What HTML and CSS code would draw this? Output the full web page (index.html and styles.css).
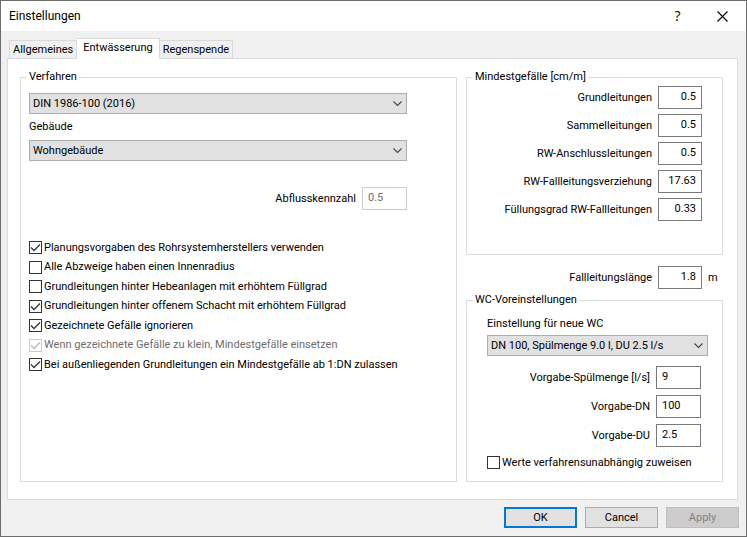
FILE: index.html
```html
<!DOCTYPE html>
<html lang="de">
<head>
  <meta charset="UTF-8" />
  <meta name="viewport" content="width=device-width, initial-scale=1.0" />
  <title>Einstellungen</title>
  <link rel="stylesheet" href="styles.css">
</head>
<body>
  <div class="dialog">
    <header class="titlebar">
      <h1>Einstellungen</h1>
      <button type="button" class="title-btn" aria-label="Hilfe">?</button>
      <button type="button" class="title-btn" aria-label="Schließen">
        <svg width="11" height="11" viewBox="0 0 11 11"><path d="M.5 .5l10 10M10.5 .5l-10 10" stroke="#000" stroke-width="1.1" fill="none"/></svg>
      </button>
    </header>

    <nav class="tabs">
      <button type="button" class="tab">Allgemeines</button>
      <button type="button" class="tab active">Entwässerung</button>
      <button type="button" class="tab">Regenspende</button>
    </nav>

    <main class="page">
      <fieldset class="group">
        <legend>Verfahren</legend>
        <div class="verfahren">
          <select aria-label="Verfahren">
            <option>DIN 1986-100 (2016)</option>
          </select>
          <label class="select-label" for="gebaeude">Gebäude</label>
          <select id="gebaeude">
            <option>Wohngebäude</option>
          </select>
          <div class="row kennzahl">
            <label for="abfluss">Abflusskennzahl</label>
            <input type="text" id="abfluss" class="field" value="0.5" disabled>
          </div>
          <div class="checks">
            <label class="check"><input type="checkbox" checked>Planungsvorgaben des Rohrsystemherstellers verwenden</label>
            <label class="check"><input type="checkbox">Alle Abzweige haben einen Innenradius</label>
            <label class="check"><input type="checkbox">Grundleitungen hinter Hebeanlagen mit erhöhtem Füllgrad</label>
            <label class="check"><input type="checkbox" checked>Grundleitungen hinter offenem Schacht mit erhöhtem Füllgrad</label>
            <label class="check"><input type="checkbox" checked>Gezeichnete Gefälle ignorieren</label>
            <label class="check disabled"><input type="checkbox" checked disabled>Wenn gezeichnete Gefälle zu klein, Mindestgefälle einsetzen</label>
            <label class="check"><input type="checkbox" checked>Bei außenliegenden Grundleitungen ein Mindestgefälle ab 1:DN zulassen</label>
          </div>
        </div>
      </fieldset>

      <div class="side">
        <fieldset class="group">
          <legend>Mindestgefälle [cm/m]</legend>
          <div class="gefaelle">
            <div class="row">
              <label for="grund">Grundleitungen</label>
              <input type="text" id="grund" class="field num" value="0.5">
            </div>
            <div class="row">
              <label for="sammel">Sammelleitungen</label>
              <input type="text" id="sammel" class="field num" value="0.5">
            </div>
            <div class="row">
              <label for="anschluss">RW-Anschlussleitungen</label>
              <input type="text" id="anschluss" class="field num" value="0.5">
            </div>
            <div class="row">
              <label for="verziehung">RW-Fallleitungsverziehung</label>
              <input type="text" id="verziehung" class="field num" value="17.63">
            </div>
            <div class="row">
              <label for="fuellung">Füllungsgrad RW-Fallleitungen</label>
              <input type="text" id="fuellung" class="field num" value="0.33">
            </div>
          </div>
        </fieldset>

        <div class="row laenge">
          <label for="laenge">Fallleitungslänge</label>
          <input type="text" id="laenge" class="field num" value="1.8">
          <span class="unit">m</span>
        </div>

        <fieldset class="group">
          <legend>WC-Voreinstellungen</legend>
          <div class="wc">
            <label for="wc">Einstellung für neue WC</label>
            <select id="wc">
              <option>DN 100, Spülmenge 9.0 l, DU 2.5 l/s</option>
            </select>
            <div class="vorgaben">
              <div class="row">
                <label for="spuel">Vorgabe-Spülmenge [l/s]</label>
                <input type="text" id="spuel" class="field" value="9">
              </div>
              <div class="row">
                <label for="dn">Vorgabe-DN</label>
                <input type="text" id="dn" class="field" value="100">
              </div>
              <div class="row">
                <label for="du">Vorgabe-DU</label>
                <input type="text" id="du" class="field" value="2.5">
              </div>
            </div>
            <label class="check"><input type="checkbox">Werte verfahrensunabhängig zuweisen</label>
          </div>
        </fieldset>
      </div>
    </main>

    <footer class="buttons">
      <button type="button" class="btn default">OK</button>
      <button type="button" class="btn">Cancel</button>
      <button type="button" class="btn" disabled>Apply</button>
    </footer>
  </div>
</body>
</html>
```

FILE: styles.css
```css
* {
  box-sizing: border-box;
}

body {
  margin: 0;
  font-family: Tahoma, Roboto, sans-serif;
  font-size: 11px;
  line-height: 14px;
  color: #000;
}

button, input, select {
  font: inherit;
  color: inherit;
  margin: 0;
}

.dialog {
  display: flex;
  flex-direction: column;
  min-height: 100vh;
  background: #f0f0f0;
  border: 1px solid #6d6d6d;
}

/* title bar */
.titlebar {
  display: flex;
  align-items: center;
  height: 30px;
  padding: 0 1px 0 8px;
  background: #fff;
}

.titlebar h1 {
  flex: 1;
  margin: 0;
  font-size: 12px;
  font-weight: normal;
}

.title-btn {
  display: flex;
  align-items: center;
  justify-content: center;
  width: 45px;
  height: 30px;
  padding: 0;
  border: 0;
  background: none;
  font-family: "Segoe UI", "Open Sans", sans-serif;
  font-size: 14px;
}

/* tabs */
.tabs {
  position: relative;
  display: flex;
  align-items: flex-end;
  height: 28px;
  padding-left: 8px;
  margin-bottom: -1px;
}

.tab {
  height: 19px;
  padding: 0 3px;
  border: 1px solid #d9d9d9;
  border-left-width: 0;
  background: #f0f0f0;
}

.tab:first-child {
  border-left-width: 1px;
}

.tab.active {
  height: 21px;
  padding: 0 6px 2px;
  border-bottom-color: #fff;
  background: #fff;
}

.page {
  flex: 1;
  display: grid;
  grid-template-columns: 1fr 257px;
  gap: 9px;
  margin: 0 8px 0 6px;
  padding: 11px 14px 17px 12px;
  border: 1px solid #dcdcdc;
  background: #fff;
}

.group {
  min-width: 0;
  margin: 0;
  padding: 0;
  border: 1px solid #dcdcdc;
}

.group legend {
  margin-left: 6px;
  padding: 0 2px;
}

.verfahren {
  display: flex;
  flex-direction: column;
  padding: 9px 49px 9px 8px;
}

.select-label {
  margin: 6px 0;
}

.kennzahl {
  margin: 26px 0 31px;
}

.side {
  display: flex;
  flex-direction: column;
}

.gefaelle {
  display: flex;
  flex-direction: column;
  gap: 5px;
  padding: 2px 20px 33px 8px;
}

.laenge {
  margin: 11px 0 4px;
}

.wc {
  display: flex;
  flex-direction: column;
  padding: 10px 14px 12px 20px;
}

.wc select {
  margin: 4px 0 10px;
}

.vorgaben {
  display: flex;
  flex-direction: column;
  gap: 6px;
  padding-right: 7px;
  margin-bottom: 9px;
}

/* controls */
.row {
  display: flex;
  align-items: center;
  justify-content: flex-end;
  gap: 6px;
}

.unit {
  width: 15px;
}

.field {
  width: 45px;
  height: 23px;
  padding: 0 5px 2px;
  border: 1px solid #7a7a7a;
  border-radius: 0;
  background: #fff;
}

.field.num {
  width: 44px;
  text-align: right;
}

.field:disabled {
  border-color: #ccc;
  color: #6d6d6d;
}

select {
  appearance: none;
  width: 100%;
  height: 21px;
  padding: 0 20px 0 3px;
  border: 1px solid #adadad;
  border-radius: 0;
  background: #e1e1e1 url("data:image/svg+xml,%3Csvg xmlns='http://www.w3.org/2000/svg' width='9' height='6'%3E%3Cpath d='M.5 .5l4 4 4-4' fill='none' stroke='%23444' stroke-width='1.1'/%3E%3C/svg%3E") no-repeat right 4px center;
}

.checks {
  display: flex;
  flex-direction: column;
  justify-content: space-between;
  height: 130px;
}

.check {
  display: flex;
  align-items: center;
  gap: 2px;
  height: 13px;
  white-space: nowrap;
}

.check.disabled {
  color: #6d6d6d;
}

.check input {
  appearance: none;
  flex: none;
  width: 13px;
  height: 13px;
  border: 1px solid #333;
  background: #fff;
}

.check input:checked {
  background: #fff url("data:image/svg+xml,%3Csvg xmlns='http://www.w3.org/2000/svg' width='11' height='11'%3E%3Cpath d='M1 5.5l3 3 6-6' fill='none' stroke='%23333' stroke-width='1.3'/%3E%3C/svg%3E") no-repeat center;
}

.check input:disabled {
  border-color: #ccc;
  background-image: url("data:image/svg+xml,%3Csvg xmlns='http://www.w3.org/2000/svg' width='11' height='11'%3E%3Cpath d='M1 5.5l3 3 6-6' fill='none' stroke='%23bbb' stroke-width='1.3'/%3E%3C/svg%3E");
}

/* bottom buttons */
.buttons {
  display: flex;
  justify-content: flex-end;
  gap: 8px;
  padding: 7px 7px 8px;
}

.btn {
  width: 73px;
  height: 21px;
  padding: 0;
  border: 1px solid #adadad;
  background: #e1e1e1;
}

.btn.default {
  border: 2px solid #0078d7;
}

.btn:disabled {
  border-color: #bfbfbf;
  background: #ccc;
  color: #838383;
}
```
